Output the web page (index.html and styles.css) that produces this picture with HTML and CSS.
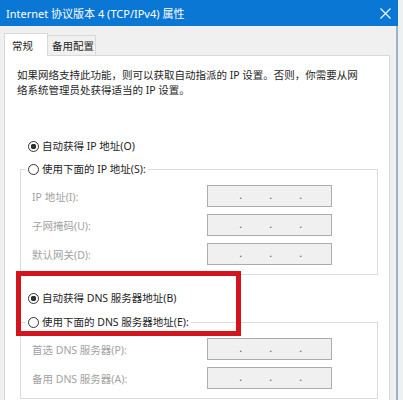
FILE: index.html
```html
<!DOCTYPE html>
<html lang="zh-CN">
<head>
    <meta charset="UTF-8">
    <title>Internet 协议版本 4 (TCP/IPv4) 属性</title>
    <link rel="stylesheet" href="styles.css">
</head>
<body>
    <div class="window">
        <div class="titlebar">
            <span class="title">Internet 协议版本 4 (TCP/IPv4) 属性</span>
            <svg class="close" width="11" height="11" viewBox="0 0 11 11">
                <path d="M0.5 0.5L10.5 10.5M10.5 0.5L0.5 10.5" stroke="#fff" stroke-width="1.1" fill="none"/>
            </svg>
        </div>

        <div class="frame">
            <div class="tabs">
                <div class="tab active">常规</div>
                <div class="tab">备用配置</div>
            </div>

            <div class="panel">
                <p class="intro">如果网络支持此功能，则可以获取自动指派的 IP 设置。否则，你需要从网<br>络系统管理员处获得适当的 IP 设置。</p>

                <div class="choice first">
                    <span class="circle checked"></span>自动获得 IP 地址(O)
                </div>

                <fieldset class="group">
                    <legend>
                        <span class="choice"><span class="circle"></span>使用下面的 IP 地址(S):</span>
                    </legend>
                    <div class="field">
                        <span class="label">IP 地址(I):</span>
                        <span class="ipbox"><span>.</span><span>.</span><span>.</span></span>
                    </div>
                    <div class="field">
                        <span class="label">子网掩码(U):</span>
                        <span class="ipbox"><span>.</span><span>.</span><span>.</span></span>
                    </div>
                    <div class="field">
                        <span class="label">默认网关(D):</span>
                        <span class="ipbox"><span>.</span><span>.</span><span>.</span></span>
                    </div>
                </fieldset>

                <div class="choice dns">
                    <span class="circle checked"></span>自动获得 DNS 服务器地址(B)
                </div>

                <fieldset class="group dns-group">
                    <legend>
                        <span class="choice"><span class="circle"></span>使用下面的 DNS 服务器地址(E):</span>
                    </legend>
                    <div class="field">
                        <span class="label">首选 DNS 服务器(P):</span>
                        <span class="ipbox"><span>.</span><span>.</span><span>.</span></span>
                    </div>
                    <div class="field">
                        <span class="label">备用 DNS 服务器(A):</span>
                        <span class="ipbox"><span>.</span><span>.</span><span>.</span></span>
                    </div>
                </fieldset>

                <!-- annotation drawn over the dialog -->
                <div class="highlight"></div>
            </div>
        </div>
    </div>
</body>
</html>
```

FILE: styles.css
```css
body {
    margin: 0;
    background: #eef1f2;
    font-family: "Noto Sans", "Noto Sans CJK SC", sans-serif;
    font-size: 10.5px;
    color: #1e1e1e;
}
.window {
    width: 398px;
}
.titlebar {
    height: 26px;
    background: #0a77d5;
    color: #fff;
    display: flex;
    align-items: center;
    justify-content: space-between;
    padding: 0 7px 0 6px;
    box-sizing: border-box;
    font-size: 11px;
}
.frame {
    background: #f0f0f0;
    border-right: 2px solid #9db3bf;
    padding: 7px 6px 0 4px;
    height: 374px;
    box-sizing: border-box;
    overflow: hidden;
}
.tabs {
    display: flex;
    align-items: flex-end;
    height: 22px;
}
.tab {
    display: flex;
    align-items: center;
    box-sizing: border-box;
    height: 20px;
    width: 49px;
    padding-left: 4px;
    margin-left: -1px;
    border: 1px solid #d9d9d9;
    border-bottom: none;
    background: #f0f0f0;
}
.tab.active {
    position: relative;
    z-index: 1;
    height: 23px;
    width: 44px;
    margin: 0 0 -1px 0;
    padding-left: 7px;
    background: #fff;
}
.panel {
    position: relative;
    background: #fff;
    border: 1px solid #d9d9d9;
    padding: 12px 0 0 12px;
    height: 360px;
}
.intro {
    margin: 0;
    line-height: 15px;
}
.choice {
    display: flex;
    align-items: center;
    gap: 3px;
    height: 18px;
    line-height: 18px;
    white-space: nowrap;
}
.choice.first {
    margin: 39px 0 0 11px;
}
.choice.dns {
    margin: 14px 0 0 11px;
}
.circle {
    width: 11px;
    height: 11px;
    box-sizing: border-box;
    border: 1px solid #333;
    border-radius: 50%;
    background: #fff;
}
.circle.checked {
    background: radial-gradient(circle, #333 0 2.6px, #fff 3px);
}
.group {
    margin: 5px 0 0 3px;
    width: 358px;
    box-sizing: border-box;
    border: 1px solid #dcdcdc;
    padding: 7px 0 9px 11px;
    min-inline-size: 0;
}
.dns-group {
    margin-top: 6px;
}
.group legend {
    padding: 0 2px;
    margin-left: -6px;
}
.field {
    display: grid;
    grid-template-columns: 175px 125px;
    align-items: center;
    height: 22px;
}
.field + .field {
    margin-top: 7px;
}
.label {
    color: #a2a2a2;
}
.ipbox {
    display: flex;
    height: 22px;
    box-sizing: border-box;
    border: 1px solid #acacac;
    background: #f0f0f0;
    padding: 0 0 3px 4px;
    align-items: center;
    color: #555;
}
.ipbox span {
    width: 30px;
    text-align: right;
}
.highlight {
    position: absolute;
    left: 11px;
    top: 215px;
    width: 225px;
    height: 65px;
    box-sizing: border-box;
    border: 5px solid #d3141c;
}
```
